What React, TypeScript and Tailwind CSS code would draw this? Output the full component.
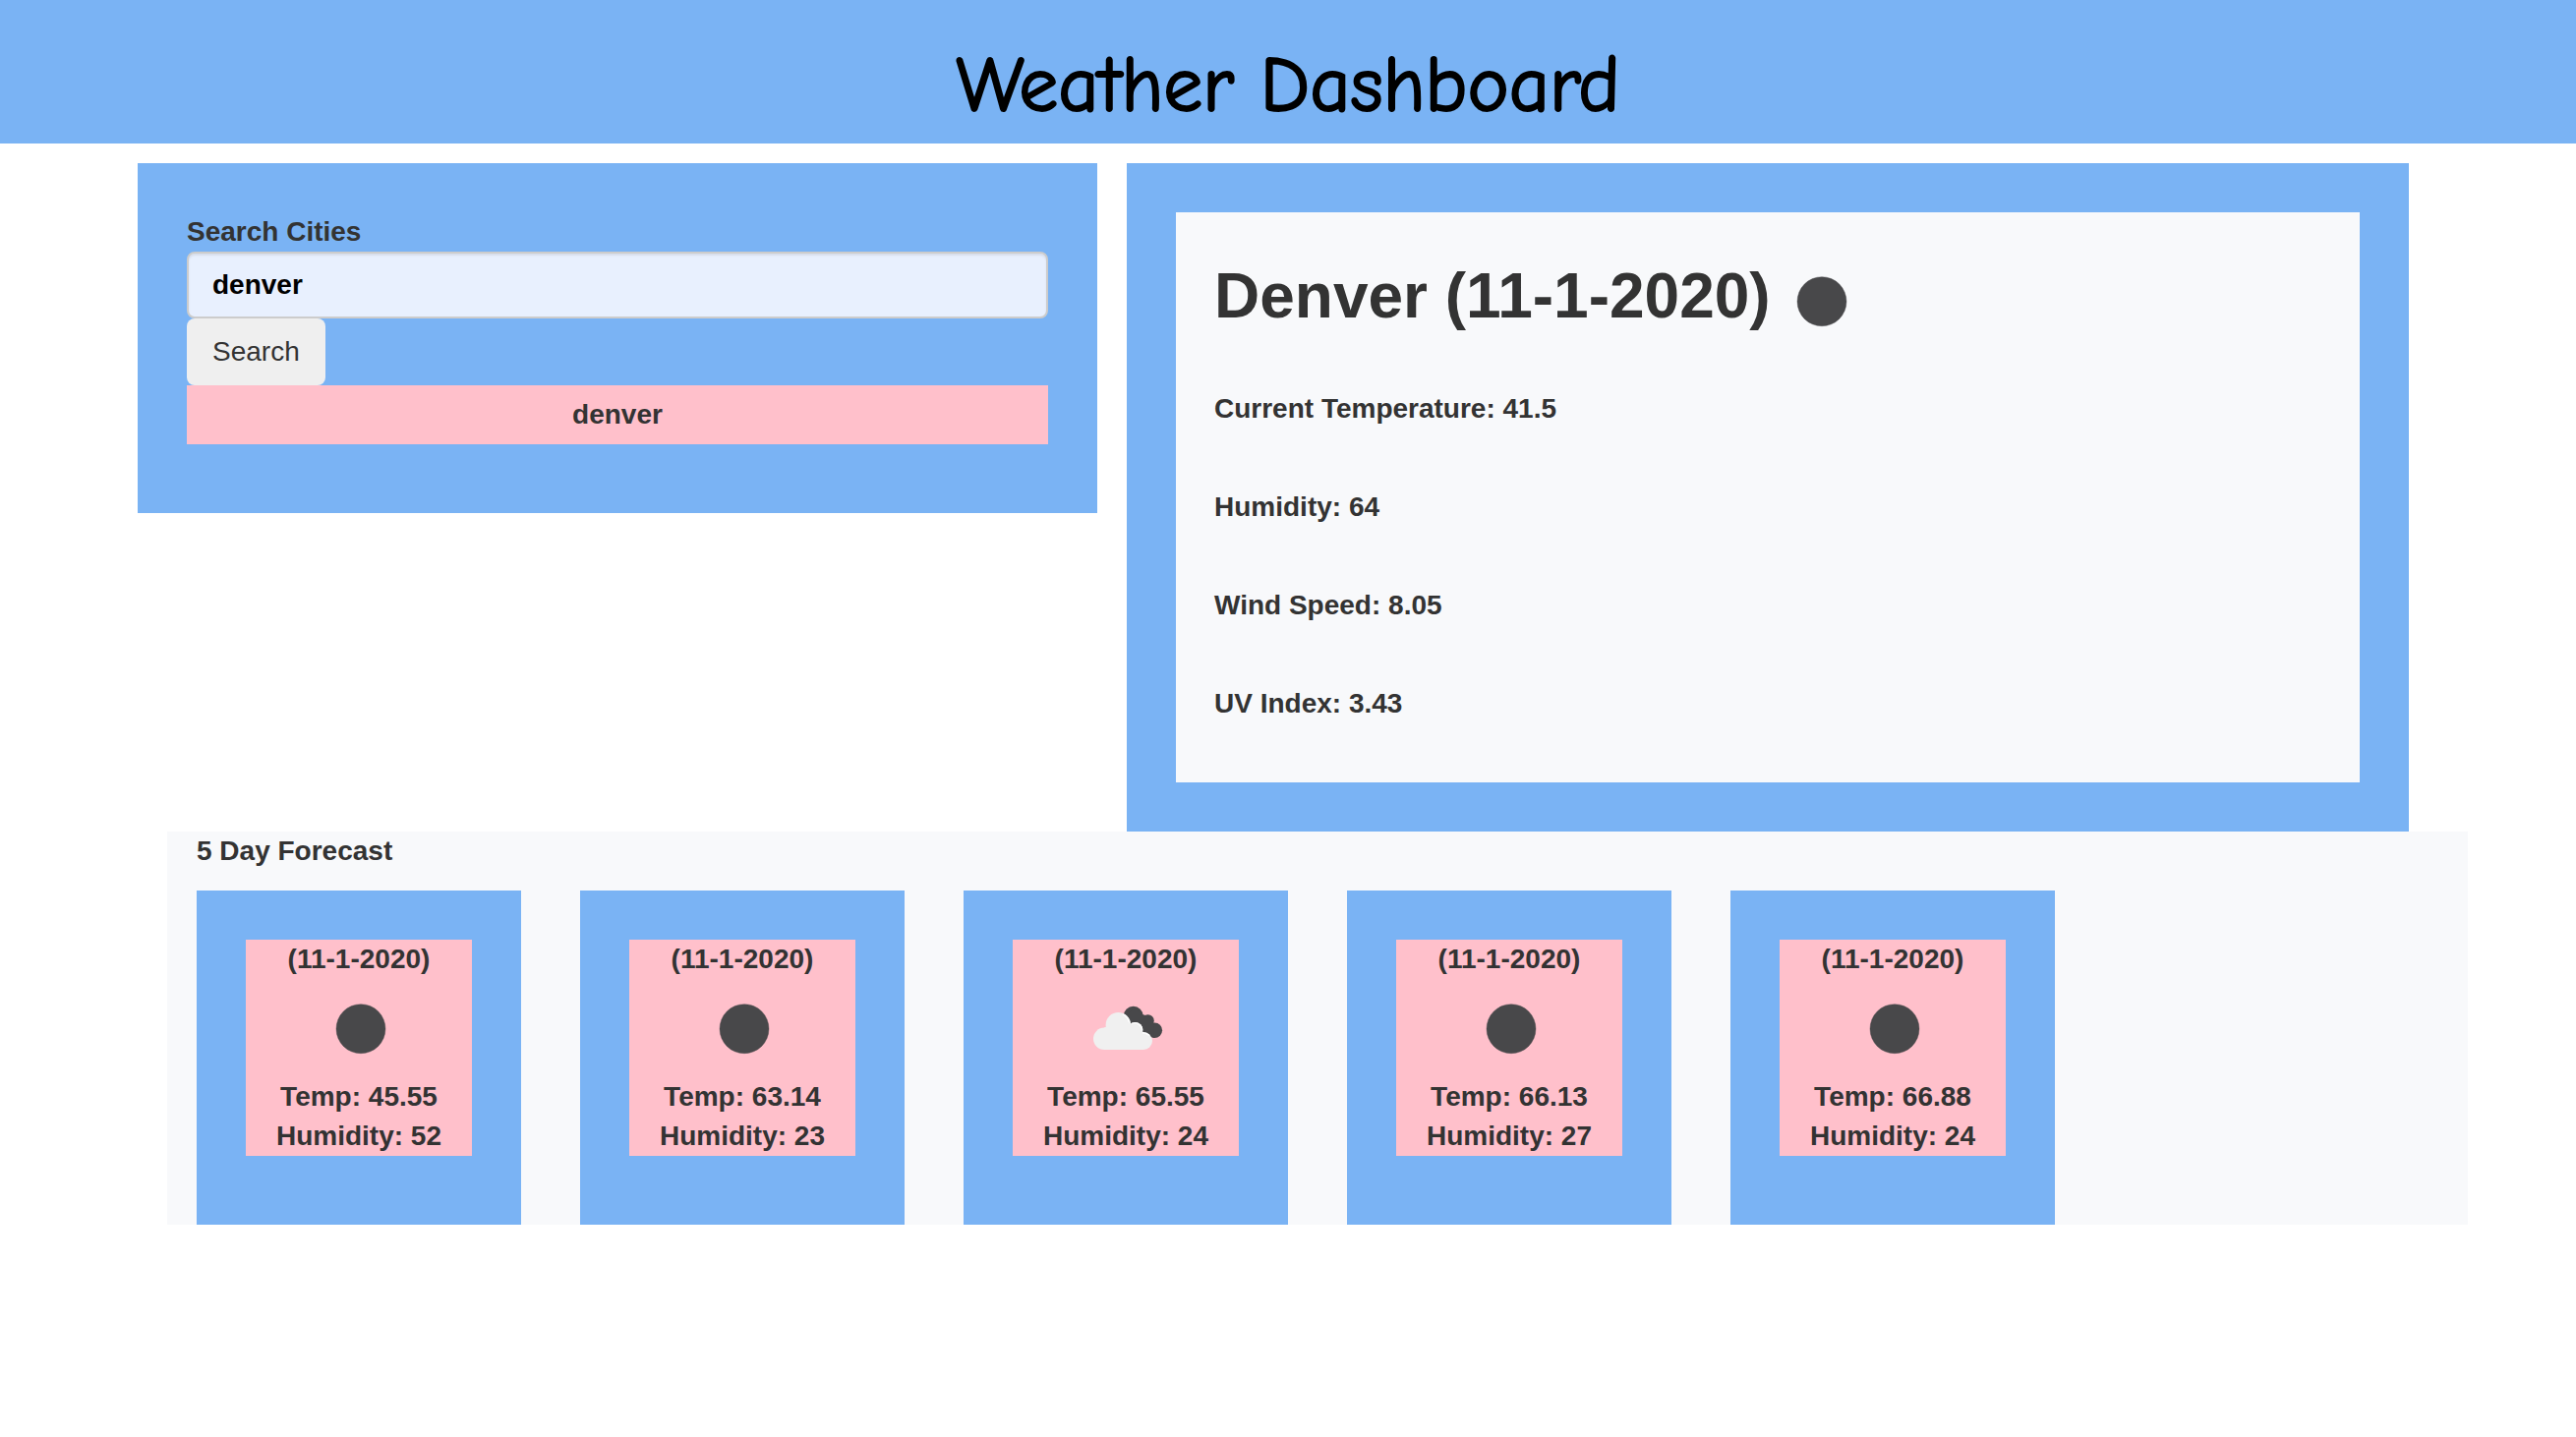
import { useState } from "react";

type Sky = "clear" | "broken";

interface Day {
  date: string;
  sky: Sky;
  temp: string;
  humidity: string;
}

const days: Day[] = [
  { date: "(11-1-2020)", sky: "clear", temp: "45.55", humidity: "52" },
  { date: "(11-1-2020)", sky: "clear", temp: "63.14", humidity: "23" },
  { date: "(11-1-2020)", sky: "broken", temp: "65.55", humidity: "24" },
  { date: "(11-1-2020)", sky: "clear", temp: "66.13", humidity: "27" },
  { date: "(11-1-2020)", sky: "clear", temp: "66.88", humidity: "24" },
];

const readings = [
  "Current Temperature: 41.5",
  "Humidity: 64",
  "Wind Speed: 8.05",
  "UV Index: 3.43",
];

function SkyIcon({ sky }: { sky: Sky }) {
  if (sky === "clear") {
    return (
      <svg viewBox="0 0 100 100" className="inline-block size-[100px] align-middle" role="img" aria-label="Clear night">
        <circle cx="52" cy="50.7" r="25" fill="#48484a" stroke="#48484a" strokeOpacity="0.4" strokeWidth="1" />
      </svg>
    );
  }
  return (
    <svg viewBox="0 0 100 100" className="inline-block size-[100px] align-middle" role="img" aria-label="Broken clouds">
      <g fill="#48484a">
        <circle cx="57.7" cy="37.8" r="10" />
        <circle cx="72.5" cy="42.5" r="6.3" />
        <circle cx="79.4" cy="52.2" r="7.7" />
        <path d="M48 40 L58 30 L67 36 L73 38 L78.5 45 L79 59.9 L74 58 L60 54 Z" />
      </g>
      <g fill="#f0f0f0">
        <circle cx="28.2" cy="60.8" r="11.2" />
        <circle cx="42.4" cy="46.9" r="12.8" />
        <circle cx="59.4" cy="52" r="8" />
        <circle cx="68" cy="63" r="9" />
        <path d="M28 49.6 L42 45 L60 50 L68 54 V72 H28 Z" />
      </g>
      <g fill="none" stroke="#ffffff" strokeWidth="1.6" strokeLinecap="round" opacity="0.85">
        <path d="M47.5 36.2 A11.8 11.8 0 0 1 53.6 44" />
        <path d="M56.5 45.4 A7.2 7.2 0 0 1 66.5 52" />
        <path d="M67.5 54.9 A8.2 8.2 0 0 1 73.5 57.2" />
      </g>
    </svg>
  );
}

function ForecastCard({ day }: { day: Day }) {
  return (
    <article className="bg-[#7ab3f4] px-[50px] pt-[50px] pb-[70px]">
      <div className="flex flex-col items-center bg-[#ffc0cb] whitespace-nowrap">
        <p>{day.date}</p>
        <SkyIcon sky={day.sky} />
        <p>Temp: {day.temp}</p>
        <p>Humidity: {day.humidity}</p>
      </div>
    </article>
  );
}

export default function App() {
  const [city, setCity] = useState("denver");

  return (
    <div className="min-h-screen bg-white font-['Liberation_Sans',Arial,sans-serif] text-[28px] leading-[40px] font-bold text-[#333333]">
      <header className="bg-[#7ab3f4] pt-8 pb-1 text-center">
        <h1 className="font-['Comic_Sans_MS','Comic_Neue','Noto_Sans',sans-serif] text-[80px] leading-[110px] font-normal text-black [-webkit-text-stroke:2px_black]">
          Weather Dashboard
        </h1>
      </header>

      <main className="mx-auto mt-5 w-full max-w-[2340px]">
        <div className="grid grid-cols-[976fr_1364fr] items-start">
          <section className="bg-[#7ab3f4] px-[50px] pt-[50px] pb-[70px]">
            <form onSubmit={(e) => e.preventDefault()}>
              <label htmlFor="city" className="block">
                Search Cities
              </label>
              <input
                id="city"
                type="text"
                value={city}
                onChange={(e) => setCity(e.target.value)}
                className="block h-[68px] w-full rounded-lg border-2 border-[#cccccc] bg-[#e8f0fe] px-6 text-black shadow-[inset_0_2px_2px_rgba(0,0,0,0.075)] outline-none"
              />
              <button type="submit" className="block h-[68px] rounded-lg bg-[#efefef] px-[26px] font-normal">
                Search
              </button>
            </form>
            <ul>
              <li className="bg-[#ffc0cb] py-[10px] text-center">denver</li>
            </ul>
          </section>

          <section className="mx-[30px] bg-[#7ab3f4] p-[50px]">
            <div className="bg-[#f8f9fb] px-[39px] pt-10 pb-[60px]">
              <h2 className="text-[64px] leading-[80px]">
                Denver (11-1-2020)
                <SkyIcon sky="clear" />
              </h2>
              <ul className="mt-10 flex flex-col gap-[60px]">
                {readings.map((reading) => (
                  <li key={reading}>{reading}</li>
                ))}
              </ul>
            </div>
          </section>
        </div>

        <section className="-mr-[30px] ml-[30px] bg-[#f8f9fb]">
          <h2 className="px-[30px] pb-5">5 Day Forecast</h2>
          <div className="grid grid-cols-6 gap-x-[60px] px-[30px]">
            {days.map((day, i) => (
              <ForecastCard key={i} day={day} />
            ))}
          </div>
        </section>
      </main>
    </div>
  );
}
